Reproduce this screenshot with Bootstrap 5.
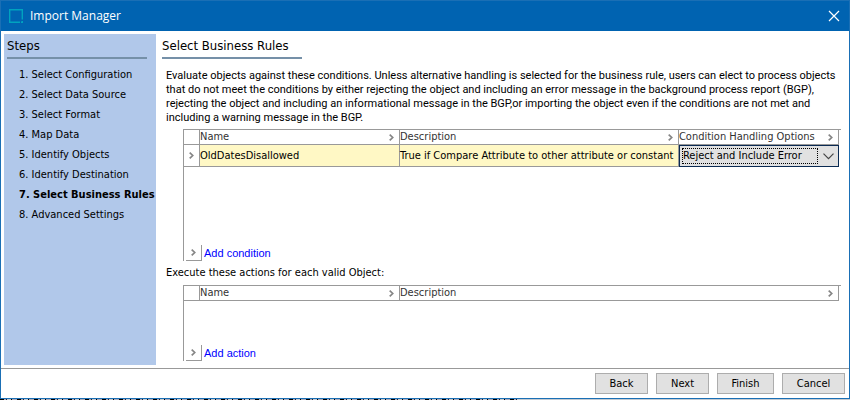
<!DOCTYPE html>
<html lang="en">
<head>
<meta charset="utf-8">
<meta name="viewport" content="width=device-width, initial-scale=1">
<title>Import Manager</title>
<link href="https://cdn.jsdelivr.net/npm/bootstrap@5.3.0/dist/css/bootstrap.min.css" rel="stylesheet">
<style>
  body { font: 11px/14px Tahoma, "DejaVu Sans Condensed", "DejaVu Sans", sans-serif; color: #000; background: #c3cbd3; }
  .shell { min-height: 100vh; }
  .window { border: 1px solid #1a6fb5; background: #fff; }
  .titlebar { height: 30px; background: #0063b1; color: #fff; font: 12px/16px "Open Sans", sans-serif; padding: 0 9px 0 8px; }
  .title-text { margin-left: 7px; }
  .close-btn { width: 12px; height: 12px; }
  .steps { width: 152px; margin: 3px 0 3px 3px; padding: 3px 0 0 3px; background: #b1c8ea; }
  .heading { font-size: 13px; line-height: 18px; padding: 0 0 2px; border-bottom: 2px solid #7590a8; font-weight: 400; }
  .steps .heading { margin: 0 9px 0 0; }
  .steps ol { padding: 6px 0 0 12px; line-height: 20px; white-space: nowrap; }
  .content { padding: 6px 8px 0 6px; min-width: 0; }
  .content .heading { width: 140px; white-space: nowrap; margin: 0; }
  .intro { margin: 10px 0 4px 4px; font-family: Tahoma, Roboto, sans-serif; }
  .actions-label { margin: 5px 0 5px 4px; line-height: 14px; }
  .grid-box { margin-left: 21px; border-top: 1px solid #999; border-left: 1px solid #999; }
  .grid-table { width: calc(100% - 2px); table-layout: fixed; border-collapse: separate; border-spacing: 0; }
  .grid-table th, .grid-table td { padding: 0; font-weight: 400; white-space: nowrap; border: solid #999; border-width: 0 1px 1px 0; }
  .grid-table th { height: 15px; line-height: 14px; color: #333; }
  .grid-table td { height: 22px; background: #fff8c5; }
  .grid-table .handle { background: #fff; text-align: center; }
  .c-handle { width: 16px; }
  .c-name { width: 200px; }
  .c-opt { width: 160px; }
  .arrow { width: 5px; height: 7px; flex: none; }
  .th-arrow { margin-right: 5px; }
  .grid-table .picker-cell { border: 0; }
  .picker { height: 22px; border: 1px solid #0a2a52; background: #e1e1e1; padding: 2px 4px 2px 2px; }
  .picker select { appearance: none; border: 1px dotted #000; border-radius: 0; background: transparent; padding: 0; line-height: 14px; color: #000; min-width: 0; height: 16px; outline: 0; margin-right: 5px; }
  .add-row { padding-left: 2px; font: 11px/16px Arial, "Liberation Sans", sans-serif; }
  .add-handle { width: 16px; height: 16px; border: solid #999; border-width: 0 1px 1px 0; margin-right: 2px; }
  .add-row a { color: #00f; text-decoration: none; }
  .space-conditions { height: 78px; }
  .space-actions { height: 44px; }
  .footer-bar { border-top: 1px solid #999; padding: 4px; gap: 8px; height: 30px; }
  .push { height: 21px; width: 53px; border: 1px solid #adadad; background: #e1e1e1; padding: 0; color: #000; }
  .push-mid { width: 57px; }
  .push-wide { width: 63px; }
  .backdrop-edge { height: 1px; width: 61%; background: repeating-linear-gradient(90deg, #000 0 4px, #aab 4px 6px, #223 6px 7px, #c3cbd3 7px 11px, #000 11px 12px, #aab 12px 17px); }
</style>
</head>
<body>
<svg class="d-none"><symbol id="arrow" viewBox="0 0 5 7"><path d="M.7.7L3.7 3.5.7 6.3" fill="none" stroke="#858585" stroke-width="1.7"/></symbol></svg>
<div class="shell d-flex flex-column">
  <div class="window d-flex flex-column flex-grow-1">
    <header class="titlebar d-flex align-items-center">
      <svg width="14" height="14" viewBox="0 0 14 14" aria-hidden="true"><path d="M13.3 10.5V.7H.7v12.6H11M12 13.3h1.3V12" fill="none" stroke="#00a3bf" stroke-width="1.4"/></svg>
      <span class="title-text flex-grow-1">Import Manager</span>
      <button type="button" class="btn p-0 border-0 d-flex close-btn" aria-label="Close"><svg width="12" height="12" viewBox="0 0 12 12"><path d="M1 1l10 10M11 1L1 11" stroke="#fff" stroke-width="1.2"/></svg></button>
    </header>

    <div class="d-flex flex-grow-1">
      <nav class="steps flex-shrink-0" aria-label="Steps">
        <h2 class="heading">Steps</h2>
        <ol class="list-unstyled mb-0">
          <li>1. Select Configuration</li>
          <li>2. Select Data Source</li>
          <li>3. Select Format</li>
          <li>4. Map Data</li>
          <li>5. Identify Objects</li>
          <li>6. Identify Destination</li>
          <li class="fw-bold">7. Select Business Rules</li>
          <li>8. Advanced Settings</li>
        </ol>
      </nav>

      <main class="content flex-grow-1">
        <h1 class="heading">Select Business Rules</h1>
        <p class="intro text-nowrap">Evaluate objects against these conditions. Unless alternative handling is selected for the business rule, users can elect to process objects<br>that do not meet the conditions by either rejecting the object and including an error message in the background process report (BGP),<br>rejecting the object and including an informational message in the BGP,or importing the object even if the conditions are not met and<br>including a warning message in the BGP.</p>

        <div class="grid-box">
          <table class="grid-table" aria-label="Conditions">
            <colgroup><col class="c-handle"><col class="c-name"><col><col class="c-opt"></colgroup>
            <thead>
              <tr>
                <th></th>
                <th><div class="d-flex align-items-center justify-content-between">Name<svg class="arrow th-arrow"><use href="#arrow"/></svg></div></th>
                <th><div class="d-flex align-items-center justify-content-between">Description<svg class="arrow th-arrow"><use href="#arrow"/></svg></div></th>
                <th><div class="d-flex align-items-center justify-content-between"><span id="opt-label">Condition Handling Options</span><svg class="arrow th-arrow"><use href="#arrow"/></svg></div></th>
              </tr>
            </thead>
            <tbody>
              <tr>
                <td class="handle"><svg class="arrow"><use href="#arrow"/></svg></td>
                <td>OldDatesDisallowed</td>
                <td>True if Compare Attribute to other attribute or constant</td>
                <td class="picker-cell">
                  <div class="picker d-flex align-items-center">
                    <select class="flex-grow-1" aria-labelledby="opt-label"><option>Reject and Include Error</option></select>
                    <svg class="flex-shrink-0" width="11" height="7" viewBox="0 0 11 7"><path d="M.5.7l5 5 5-5" fill="none" stroke="#444" stroke-width="1.2"/></svg>
                  </div>
                </td>
              </tr>
            </tbody>
          </table>
          <div class="space-conditions"></div>
          <div class="add-row d-flex">
            <span class="add-handle d-flex align-items-center justify-content-center"><svg class="arrow"><use href="#arrow"/></svg></span>
            <a href="#">Add condition</a>
          </div>
        </div>

        <p class="actions-label">Execute these actions for each valid Object:</p>

        <div class="grid-box">
          <table class="grid-table" aria-label="Actions">
            <colgroup><col class="c-handle"><col class="c-name"><col></colgroup>
            <thead>
              <tr>
                <th></th>
                <th><div class="d-flex align-items-center justify-content-between">Name<svg class="arrow th-arrow"><use href="#arrow"/></svg></div></th>
                <th><div class="d-flex align-items-center justify-content-between">Description<svg class="arrow th-arrow"><use href="#arrow"/></svg></div></th>
              </tr>
            </thead>
          </table>
          <div class="space-actions"></div>
          <div class="add-row d-flex">
            <span class="add-handle d-flex align-items-center justify-content-center"><svg class="arrow"><use href="#arrow"/></svg></span>
            <a href="#">Add action</a>
          </div>
        </div>
      </main>
    </div>

    <footer class="footer-bar d-flex justify-content-end">
      <button type="button" class="push">Back</button>
      <button type="button" class="push">Next</button>
      <button type="button" class="push push-mid">Finish</button>
      <button type="button" class="push push-wide">Cancel</button>
    </footer>
  </div>
  <div class="backdrop-edge"></div>
</div>
<script src="https://cdn.jsdelivr.net/npm/bootstrap@5.3.0/dist/js/bootstrap.bundle.min.js"></script>
</body>
</html>
